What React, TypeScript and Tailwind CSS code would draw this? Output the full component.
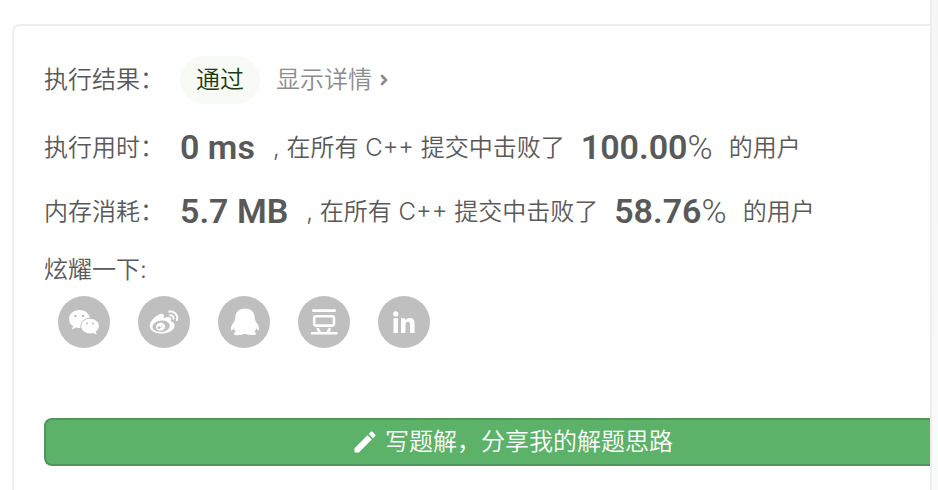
import React from "react";
import { MdEdit } from "react-icons/md";
import { AiOutlineWeibo } from "react-icons/ai";
import { ChevronRight } from "lucide-react";

function Wechat() {
  return (
    <svg viewBox="0 0 52 52" className="size-full" aria-hidden="true">
      <path fill="#fff" d="M21.500 14c-6 0-10.500 4-10.500 9 0 3 1.400 5.400 4 7l-1 3.500 4-2c1.500.5 3 .6 4.500.6-1-5.800 3.500-10.300 9.300-10.300C30.800 17 26.500 14 21.500 14z" />
      <path fill="#fff" d="M32 22.700c-5 0-8.800 3.300-8.800 7.400s3.800 7.300 8.800 7.300c1.200 0 2.300-.2 3.400-.5l3.300 1.700-.9-3c2-1.500 3.200-3.300 3.200-5.500 0-4.100-4-7.400-9-7.400z" />
      <g fill="#bfbfbf">
        <circle cx="17.500" cy="20" r="1.300" /><circle cx="25" cy="20" r="1.300" />
        <circle cx="29" cy="27.500" r="1.100" /><circle cx="35" cy="27.500" r="1.100" />
      </g>
    </svg>
  );
}

function Weibo() {
  return <AiOutlineWeibo className="size-[34px] text-white" aria-hidden="true" />;
}

function QQ() {
  return (
    <svg viewBox="0 0 52 52" className="size-full" aria-hidden="true">
      <path fill="#fff" d="M27 12.500c-6 0-9.700 3.800-9.700 9.500 0 1.200-.9 2-.9 3.500-2.300 2.800-3.800 5.200-3.500 8.200.2 1.500 1.300.8 3-1.200.4 1.400 1 2.500 2 3.400-1.700.5-2.300 1.200-2.100 2 .4 1.600 7 1.700 9.900.2h2.600c2.900 1.500 9.500 1.300 9.800-.3.100-.8-.5-1.400-2-1.900 1-.9 1.600-2 2-3.400 1.500 2 2.700 2.700 2.900 1.200.4-3-1.200-5.400-3.400-8.200 0-1.500-.9-2.300-.9-3.500 0-5.700-3.700-9.500-9.700-9.500z" />
    </svg>
  );
}

function Douban() {
  return (
    <svg viewBox="0 0 52 52" className="size-full" fill="none" stroke="#fff" strokeWidth="2.600" strokeLinecap="round" strokeLinejoin="round" aria-hidden="true">
      <path d="M15.200 14.600h21.600M14 37.300h24.400M19.800 33l2 3.500M31.600 33l-2 3.500" />
      <rect x="16.200" y="20.200" width="19.800" height="9.400" rx="2" />
    </svg>
  );
}

function LinkedIn() {
  return (
    <svg viewBox="0 0 52 52" className="size-full" fill="#fff" aria-hidden="true">
      <circle cx="17.700" cy="17.900" r="2.600" />
      <path d="M15.500 22.300h4.500V37h-4.500zM23 22.300h4.300v2c.8-1.500 2.400-2.400 4.400-2.400 4 0 4.900 2.600 4.900 6.200V37h-4.500v-8c0-1.900-.3-3.300-2.200-3.300-1.800 0-2.400 1.400-2.400 3.300v8H23z" />
    </svg>
  );
}

const shares = [
  { name: "微信", Icon: Wechat },
  { name: "微博", Icon: Weibo },
  { name: "QQ", Icon: QQ },
  { name: "豆瓣", Icon: Douban },
  { name: "LinkedIn", Icon: LinkedIn },
];

type StatProps = { label: string; value: string; percent: string };

function Stat({ label, value, percent }: StatProps) {
  return (
    <p className="flex h-16 items-center whitespace-nowrap">
      <span className="w-34 shrink-0">{label}</span>
      <strong className="mr-[18px] font-[Roboto] text-[34px] font-semibold">{value}</strong>
      <span>, 在所有 C++ 提交中击败了</span>
      <span className="mx-4 font-[Roboto] text-[34px]">
        <strong className="font-semibold">{percent}</strong>
        <span className="font-light">%</span>
      </span>
      <span>的用户</span>
    </p>
  );
}

export default function App() {
  return (
    <div className="flex min-h-screen bg-white font-['Inter','Noto_Sans_CJK_SC',sans-serif] text-2xl font-[350] text-[#595959]">
      <main className="min-w-0 flex-1 overflow-hidden pt-6 pl-3">
        <section className="min-h-[calc(100vh-24px)] rounded-tl-lg border-t-2 border-l-2 border-[#eeeeee] pt-[30px] pl-[30px]">
          <div className="flex h-12 items-center">
            <span className="w-34 shrink-0">执行结果：</span>
            <span className="flex h-12 w-20 items-center justify-center rounded-full bg-[#f7faf5] text-[#1d3b11]">通过</span>
            <button type="button" className="ml-4 flex items-center gap-1 text-[#8c8c8c]">
              显示详情
              <ChevronRight className="size-4" strokeWidth={4} aria-hidden="true" />
            </button>
          </div>
          <div className="mt-3">
            <Stat label="执行用时：" value="0 ms" percent="100.00" />
            <Stat label="内存消耗：" value="5.7 MB" percent="58.76" />
          </div>
          <p className="mt-2 leading-9">炫耀一下:</p>
          <div className="mt-2 ml-3.5 flex gap-7">
            {shares.map(({ name, Icon }) => (
              <button key={name} type="button" aria-label={name} className="flex size-13 items-center justify-center rounded-full bg-[#bfbfbf]">
                <Icon />
              </button>
            ))}
          </div>
          <button type="button" className="mt-[70px] flex h-12 w-full items-center justify-center gap-1.5 rounded-l-lg border-y-2 border-l-2 border-[#519657] bg-[#5cb269] pl-12 whitespace-nowrap text-white">
            <MdEdit className="size-7" aria-hidden="true" />
            写题解，分享我的解题思路
          </button>
        </section>
      </main>
      <aside className="w-2 shrink-0 border-l-2 border-[#eeeeee] bg-linear-to-b from-[#f5f5f5] to-[#fafafa]" />
    </div>
  );
}
